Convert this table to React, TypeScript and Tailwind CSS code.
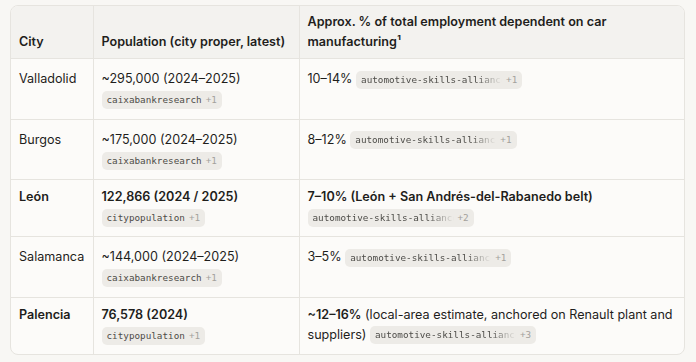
import type { ReactNode } from "react";

type Cite = { src: string; more: string; cut?: boolean };

function Badge({ src, more, cut }: Cite) {
  return (
    <span className="inline-flex items-center gap-[4px] h-[18px] px-[5px] rounded-[5px] bg-[#edebe7] align-middle font-['DejaVu_Sans_Mono',monospace] text-[9.3px] leading-none">
      <span
        className={
          cut
            ? "block max-w-[141px] overflow-hidden whitespace-nowrap text-[#4d4c48] [mask-image:linear-gradient(to_right,black_82%,transparent)]"
            : "text-[#4d4c48]"
        }
      >
        {src}
      </span>
      <span className="text-[#a3a19c]">{more}</span>
    </span>
  );
}

type Row = {
  city: string;
  pop: string;
  popCite: Cite;
  share: ReactNode;
  bold?: boolean;
  tall?: boolean;
};

const auto = "automotive-skills-alliance";

const rows: Row[] = [
  {
    city: "Valladolid",
    pop: "~295,000 (2024–2025)",
    popCite: { src: "caixabankresearch", more: "+1" },
    share: (
      <>
        10–14% <Badge src={auto} more="+1" cut />
      </>
    ),
    tall: true,
  },
  {
    city: "Burgos",
    pop: "~175,000 (2024–2025)",
    popCite: { src: "caixabankresearch", more: "+1" },
    share: (
      <>
        8–12% <Badge src={auto} more="+1" cut />
      </>
    ),
    tall: true,
  },
  {
    city: "León",
    pop: "122,866 (2024 / 2025)",
    popCite: { src: "citypopulation", more: "+1" },
    share: (
      <>
        <div className="font-semibold">7–10% (León + San Andrés-del-Rabanedo belt)</div>
        <div className="mt-[2px] flex">
          <Badge src={auto} more="+2" cut />
        </div>
      </>
    ),
    bold: true,
  },
  {
    city: "Salamanca",
    pop: "~144,000 (2024–2025)",
    popCite: { src: "caixabankresearch", more: "+1" },
    share: (
      <>
        3–5% <Badge src={auto} more="+1" cut />
      </>
    ),
    tall: true,
  },
  {
    city: "Palencia",
    pop: "76,578 (2024)",
    popCite: { src: "citypopulation", more: "+1" },
    share: (
      <>
        <span className="font-semibold">~12–16%</span> (local-area estimate, anchored on
        Renault plant and suppliers) <Badge src={auto} more="+3" cut />
      </>
    ),
    bold: true,
  },
];

export default function App() {
  return (
    <div className="min-h-screen bg-[#f8f7f4] pl-[10px] pt-[5px] font-['Inter',sans-serif] text-[12.6px] leading-[20px] text-[#1f1e1c]">
      <div className="w-[675px] overflow-hidden rounded-[8px] border border-[#e6e4df] bg-[#fcfbf9]">
        <table className="w-full table-fixed border-collapse text-left">
          <colgroup>
            <col className="w-[82px]" />
            <col className="w-[206px]" />
            <col />
          </colgroup>
          <thead>
            <tr className="bg-[#f3f2ef]">
              <th className="px-[8px] pt-[6px] pb-[6px] align-bottom font-semibold">City</th>
              <th className="border-l border-[#e6e4df] px-[8px] pt-[6px] pb-[6px] align-bottom font-semibold whitespace-nowrap">
                Population (city proper, latest)
              </th>
              <th className="border-l border-[#e6e4df] px-[8px] pt-[6px] pb-[6px] pr-[30px] align-bottom font-semibold">
                Approx. % of total employment dependent on car manufacturing¹
              </th>
            </tr>
          </thead>
          <tbody>
            {rows.map((r) => {
              const pad = r.tall ? "pt-[10px] pb-[9.5px]" : "pt-[7px] pb-[9px]";
              return (
                <tr key={r.city} className="border-t border-[#e6e4df]">
                  <td className={`px-[8px] align-top ${pad} ${r.bold ? "font-semibold" : ""}`}>
                    {r.city}
                  </td>
                  <td className={`border-l border-[#e6e4df] px-[8px] align-top ${pad}`}>
                    <div className={r.bold ? "font-semibold" : ""}>{r.pop}</div>
                    <div className="mt-[2px] flex">
                      <Badge {...r.popCite} />
                    </div>
                  </td>
                  <td className={`border-l border-[#e6e4df] px-[8px] align-top ${pad}`}>
                    {r.share}
                  </td>
                </tr>
              );
            })}
          </tbody>
        </table>
      </div>
    </div>
  );
}
